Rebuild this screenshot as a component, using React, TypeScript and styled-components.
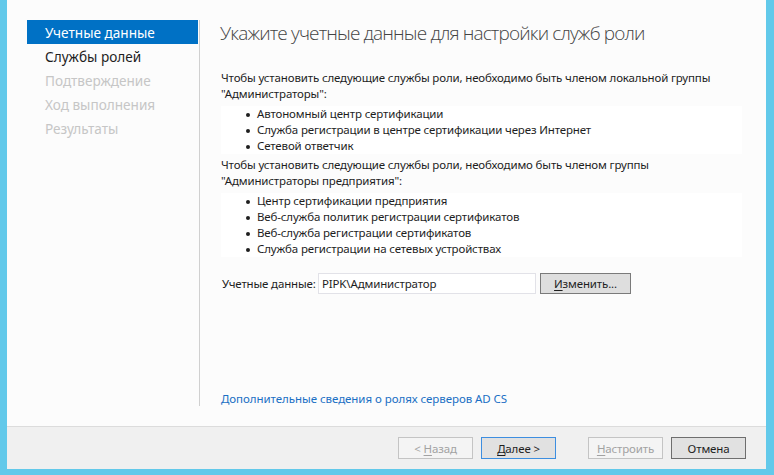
import React from "react";
import styled, { createGlobalStyle } from "styled-components";

const Global = createGlobalStyle`
  html, body { margin: 0; padding: 0; }
  body {
    background: #62c9ea;
    font-family: "Noto Sans", "Open Sans", sans-serif;
    color: #1e1e1e;
    width: 774px;
    height: 475px;
    overflow: hidden;
  }
`;

const Frame = styled.div`
  width: 774px;
  height: 475px;
  padding: 0 8px 6px 7px;
  box-sizing: border-box;
`;

const Window = styled.div`
  width: 759px;
  height: 469px;
  display: flex;
  flex-direction: column;
  background: #fcfcfc;
`;

const Body = styled.div`
  height: 426px;
  display: flex;
  padding: 20px 0 0 20px;
  box-sizing: border-box;
`;

const Sidebar = styled.nav`
  width: 172px;
  height: 386px;
  border-right: 1px solid #d0d0d0;
  display: flex;
  flex-direction: column;
`;

const NavItem = styled.div<{ $state: "active" | "normal" | "disabled" }>`
  height: 24px;
  width: 171px;
  display: flex;
  align-items: center;
  padding-left: 18px;
  box-sizing: border-box;
  font-size: 13.6px;
  background: ${(p) => (p.$state === "active" ? "#0071c5" : "transparent")};
  color: ${(p) =>
    p.$state === "active" ? "#ffffff" : p.$state === "disabled" ? "#c6c6c6" : "#1e1e1e"};
`;

const Main = styled.main`
  flex: 1;
  padding: 0 24px 0 20px;
  display: flex;
  flex-direction: column;
`;

const Title = styled.h1`
  margin: 0;
  height: 27px;
  font-family: "Open Sans", "Noto Sans", sans-serif;
  font-weight: 300;
  font-size: 19px;
  line-height: 27px;
  color: #444444;
  letter-spacing: -0.85px;
`;

const Para = styled.p<{ $top: number }>`
  margin: ${(p) => p.$top}px 0 0 1px;
  font-size: 11.5px;
  line-height: 16px;
  letter-spacing: -0.15px;
`;

const ListBox = styled.ul`
  margin: 4px 0 0 1px;
  padding: 0 0 0 36px;
  background: #ffffff;
  list-style: none;
  font-size: 11.5px;
  line-height: 16px;
  letter-spacing: -0.15px;
`;

const ListItem = styled.li`
  position: relative;
  &::before {
    content: "";
    position: absolute;
    left: -11px;
    top: 7px;
    width: 4px;
    height: 4px;
    border-radius: 50%;
    background: #1e1e1e;
  }
`;

const CredRow = styled.div`
  margin-top: 16px;
  margin-left: 2px;
  display: flex;
  align-items: center;
  font-size: 11.5px;
  letter-spacing: -0.15px;
`;

const CredLabel = styled.span`
  width: 96px;
`;

const CredInput = styled.div`
  width: 218px;
  height: 21px;
  box-sizing: border-box;
  border: 1px solid #e2e2e8;
  background: #ffffff;
  padding-left: 3px;
  display: flex;
  align-items: center;
`;

const SmallButton = styled.button`
  margin-left: 4px;
  width: 91px;
  height: 21px;
  box-sizing: border-box;
  border: 1px solid #7a7a7a;
  background: #dedede;
  font-family: inherit;
  font-size: 11.5px;
  letter-spacing: -0.15px;
  color: #1e1e1e;
  padding: 0;
`;

const Spacer = styled.div`
  flex: 1;
`;

const Link = styled.a`
  margin: 0 0 19px 1px;
  font-size: 11.5px;
  letter-spacing: -0.05px;
  color: #1a6fc4;
  text-decoration: none;
  line-height: 16px;
`;

const Footer = styled.footer`
  height: 43px;
  border-top: 1px solid #dcdcdc;
  background: #f0f0f0;
  box-sizing: border-box;
  display: flex;
  align-items: flex-start;
  justify-content: flex-end;
  padding: 10px 20px 0 0;
  gap: 8px;
`;

const Gap = styled.div`
  width: 16px;
`;

const WizButton = styled.button<{ $kind: "disabled" | "default" | "normal" }>`
  width: 75px;
  height: 22px;
  box-sizing: border-box;
  padding: 0;
  font-family: inherit;
  font-size: 11.5px;
  letter-spacing: -0.15px;
  border: 1px solid
    ${(p) => (p.$kind === "disabled" ? "#c4c4c4" : p.$kind === "default" ? "#3d8ee0" : "#6e6e6e")};
  background: ${(p) => (p.$kind === "disabled" ? "#f4f4f4" : "#e1e1e1")};
  color: ${(p) => (p.$kind === "disabled" ? "#a2a2a2" : "#1e1e1e")};
`;

const U = styled.span`
  text-decoration: underline;
  text-underline-offset: 2px;
`;

const nav: { label: string; state: "active" | "normal" | "disabled" }[] = [
  { label: "Учетные данные", state: "active" },
  { label: "Службы ролей", state: "normal" },
  { label: "Подтверждение", state: "disabled" },
  { label: "Ход выполнения", state: "disabled" },
  { label: "Результаты", state: "disabled" },
];

const list1 = [
  "Автономный центр сертификации",
  "Служба регистрации в центре сертификации через Интернет",
  "Сетевой ответчик",
];

const list2 = [
  "Центр сертификации предприятия",
  "Веб-служба политик регистрации сертификатов",
  "Веб-служба регистрации сертификатов",
  "Служба регистрации на сетевых устройствах",
];

export default function App() {
  return (
    <>
      <Global />
      <Frame>
        <Window>
          <Body>
            <Sidebar>
              {nav.map((n) => (
                <NavItem key={n.label} $state={n.state}>
                  {n.label}
                </NavItem>
              ))}
            </Sidebar>
            <Main>
              <Title>Укажите учетные данные для настройки служб роли</Title>
              <Para $top={23}>
                Чтобы установить следующие службы роли, необходимо быть членом локальной группы
                <br />
                "Администраторы":
              </Para>
              <ListBox>
                {list1.map((t) => (
                  <ListItem key={t}>{t}</ListItem>
                ))}
              </ListBox>
              <Para $top={3}>
                Чтобы установить следующие службы роли, необходимо быть членом группы
                <br />
                "Администраторы предприятия":
              </Para>
              <ListBox>
                {list2.map((t) => (
                  <ListItem key={t}>{t}</ListItem>
                ))}
              </ListBox>
              <CredRow>
                <CredLabel>Учетные данные:</CredLabel>
                <CredInput>PIPK\Администратор</CredInput>
                <SmallButton>
                  <U>И</U>зменить...
                </SmallButton>
              </CredRow>
              <Spacer />
              <Link>Дополнительные сведения о ролях серверов AD CS</Link>
            </Main>
          </Body>
          <Footer>
            <WizButton $kind="disabled">
              &lt; <U>Н</U>азад
            </WizButton>
            <WizButton $kind="default">
              <U>Д</U>алее &gt;
            </WizButton>
            <Gap />
            <WizButton $kind="disabled">
              <U>Н</U>астроить
            </WizButton>
            <WizButton $kind="normal">Отмена</WizButton>
          </Footer>
        </Window>
      </Frame>
    </>
  );
}
